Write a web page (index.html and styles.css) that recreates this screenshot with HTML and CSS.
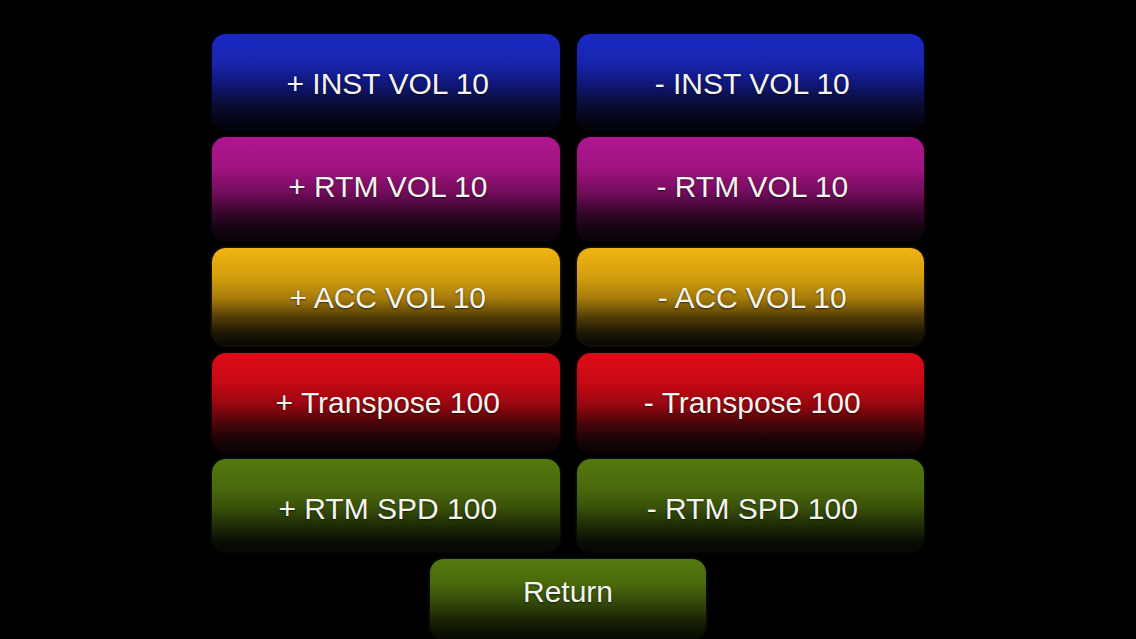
FILE: index.html
```html
<!doctype html>
<html>
<head>
<meta charset="utf-8">
<title>Settings</title>
<link rel="stylesheet" href="styles.css">
</head>
<body>
    <div class="panel">
        <div class="grid">
            <a class="btn blue" href="#">+ INST VOL 10</a>
            <a class="btn blue" href="#">- INST VOL 10</a>
            <a class="btn pink" href="#">+ RTM VOL 10</a>
            <a class="btn pink" href="#">- RTM VOL 10</a>
            <a class="btn gold" href="#">+ ACC VOL 10</a>
            <a class="btn gold" href="#">- ACC VOL 10</a>
            <a class="btn red" href="#">+ Transpose 100</a>
            <a class="btn red" href="#">- Transpose 100</a>
            <a class="btn green" href="#">+ RTM SPD 100</a>
            <a class="btn green" href="#">- RTM SPD 100</a>
        </div>
        <a class="btn green back" href="#">Return</a>
    </div>
</body>
</html>
```

FILE: styles.css
```css
*{
    padding: 0px;
    margin: 0px;
    box-sizing: border-box;
}
html, body{
    height: 100%;
    background-color: #000;
    overflow: hidden;
}
body{
    font-family: "Liberation Sans", Arial, sans-serif;
}
.panel{
    width: 712px;
    margin: 0 auto;
    padding-top: 34px;
    display: flex;
    flex-direction: column;
    align-items: center;
}
.grid{
    width: 100%;
    display: grid;
    grid-template-columns: 1fr 1fr;
    grid-template-rows: 95px 103px 97px 98px 92px;
    column-gap: 17px;
    row-gap: 8px;
}
.btn{
    display: block;
    text-align: center;
    text-decoration: none;
    color: #f4f4ee;
    font-size: 30px;
    line-height: 34px;
    padding-top: 33px;
    padding-left: 4px;
    border-radius: 14px;
    text-shadow: 0px 1px 2px rgba(0,0,0,0.6);
}
.blue{
    background: linear-gradient(to bottom, #1a29c6 0%, #1725ad 30%, #10177a 52%, #0a0d3a 72%, #05061a 88%, #030308 100%);
    box-shadow: 0px 0px 3px rgba(40,50,200,0.35);
}
.pink{
    background: linear-gradient(to bottom, #b0168f 0%, #a01380 30%, #770d5f 52%, #3a0730 72%, #150412 88%, #080307 100%);
    box-shadow: 0px 0px 3px rgba(170,20,140,0.35);
}
.gold{
    background: linear-gradient(to bottom, #eeb512 0%, #d49e0e 30%, #a57b0b 52%, #4f3b07 72%, #1c1605 88%, #0a0804 100%);
    box-shadow: 0px 0px 3px rgba(230,170,20,0.35);
}
.red{
    background: linear-gradient(to bottom, #dc0b16 0%, #c80914 30%, #980710 52%, #4a050a 72%, #1a0405 88%, #0a0304 100%);
    box-shadow: 0px 0px 3px rgba(210,10,20,0.35);
}
.green{
    background: linear-gradient(to bottom, #55780e 0%, #4b6a0c 30%, #3a520a 52%, #1f2c06 72%, #0b1004 88%, #050603 100%);
    box-shadow: 0px 0px 3px rgba(80,115,15,0.35);
}
.back{
    width: 276px;
    height: 80px;
    margin-top: 8px;
    padding-top: 16px;
    padding-left: 0px;
    background: linear-gradient(to bottom, #55780e 0%, #4b6a0c 30%, #33480a 55%, #162005 78%, #070a03 100%);
}
```
